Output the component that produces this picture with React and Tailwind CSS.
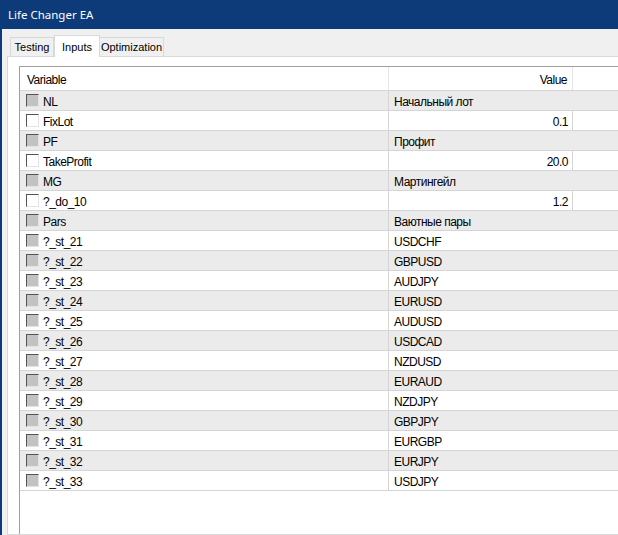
import React from 'react';

const rows = [
  { name: 'NL', value: 'Начальный лот', locked: true },
  { name: 'FixLot', value: '0.1', num: true },
  { name: 'PF', value: 'Профит', locked: true },
  { name: 'TakeProfit', value: '20.0', num: true },
  { name: 'MG', value: 'Мартингейл', locked: true },
  { name: '?_do_10', value: '1.2', num: true },
  { name: 'Pars', value: 'Ваютные пары', locked: true },
  { name: '?_st_21', value: 'USDCHF', locked: true },
  { name: '?_st_22', value: 'GBPUSD', locked: true },
  { name: '?_st_23', value: 'AUDJPY', locked: true },
  { name: '?_st_24', value: 'EURUSD', locked: true },
  { name: '?_st_25', value: 'AUDUSD', locked: true },
  { name: '?_st_26', value: 'USDCAD', locked: true },
  { name: '?_st_27', value: 'NZDUSD', locked: true },
  { name: '?_st_28', value: 'EURAUD', locked: true },
  { name: '?_st_29', value: 'NZDJPY', locked: true },
  { name: '?_st_30', value: 'GBPJPY', locked: true },
  { name: '?_st_31', value: 'EURGBP', locked: true },
  { name: '?_st_32', value: 'EURJPY', locked: true },
  { name: '?_st_33', value: 'USDJPY', locked: true },
];

const Check = ({ locked }) => (
  <span
    className={
      'block shrink-0 w-[13px] h-[13px] border border-t-[#555] border-l-[#555] border-b-[#e3e3e3] border-r-[#e3e3e3] ' +
      (locked ? 'bg-[#c2c2c2]' : 'bg-white')
    }
  />
);

const Row = ({ row, gray }) => (
  <div className={'flex h-[20px] border-b border-[#d5d5d5] ' + (gray ? 'bg-[#ebebeb]' : 'bg-white')}>
    <div className="w-[369px] flex items-center pl-[6px] gap-[4px] border-r border-[#d5d5d5]">
      <Check locked={row.locked} />
      <span className="pt-[2px]">{row.name}</span>
    </div>
    {row.num ? (
      <>
        <div className="w-[184px] flex items-center justify-end pt-[2px] pr-[4px] border-r border-[#d5d5d5]">{row.value}</div>
        <div className="flex-1" />
      </>
    ) : (
      <div className="flex-1 flex items-center pt-[2px] pl-[5px]">{row.value}</div>
    )}
  </div>
);

const App = () => {
  return (
    <div className="w-[618px] h-[535px] overflow-hidden flex flex-col bg-[#0d3a79]">
      <div className="h-[29px] shrink-0 flex items-center pl-[8px] text-white text-[11.5px]" style={{ fontFamily: '"Noto Sans", sans-serif' }}>
        Life Changer EA
      </div>

      <div className="flex-1 flex ml-[2px] bg-[#f0f0f0] pl-[5px] min-h-0">
        <div className="flex flex-col w-[660px] shrink-0 text-[12px] tracking-[-0.5px] text-black" style={{ fontFamily: '"Liberation Sans", Arial, sans-serif' }}>
          <div className="h-[27px] shrink-0 flex items-end pl-[3px] text-[11px] tracking-normal">
            <div className="w-[44px] h-[20px] mb-[-1px] flex items-center justify-center border border-[#d9d9d9] border-b-0 bg-[#f0f0f0]">Testing</div>
            <div className="w-[46px] h-[22px] mb-[-1px] relative z-10 flex items-start pt-[3px] justify-center border border-[#d9d9d9] border-b-0 bg-white">Inputs</div>
            <div className="w-[64px] h-[20px] mb-[-1px] flex items-center justify-center border border-[#d9d9d9] border-b-0 border-l-0 bg-[#f0f0f0]">Optimization</div>
          </div>

          <div className="flex-1 bg-white border border-[#d9d9d9] pt-[9px] pl-[11px]">
            <div className="border-t border-l border-[#a0a0a0] h-full">
              <div className="flex h-[24px] border-b border-[#d5d5d5] bg-white">
                <div className="w-[369px] flex items-center pt-[2px] pl-[7px] border-r border-[#e5e5e5]">Variable</div>
                <div className="w-[184px] flex items-center justify-end pt-[2px] pr-[5px] border-r border-[#e5e5e5]">Value</div>
                <div className="flex-1" />
              </div>
              {rows.map((row, i) => (
                <Row key={row.name} row={row} gray={i % 2 === 0} />
              ))}
            </div>
          </div>
        </div>
      </div>
    </div>
  );
};

export default App;
